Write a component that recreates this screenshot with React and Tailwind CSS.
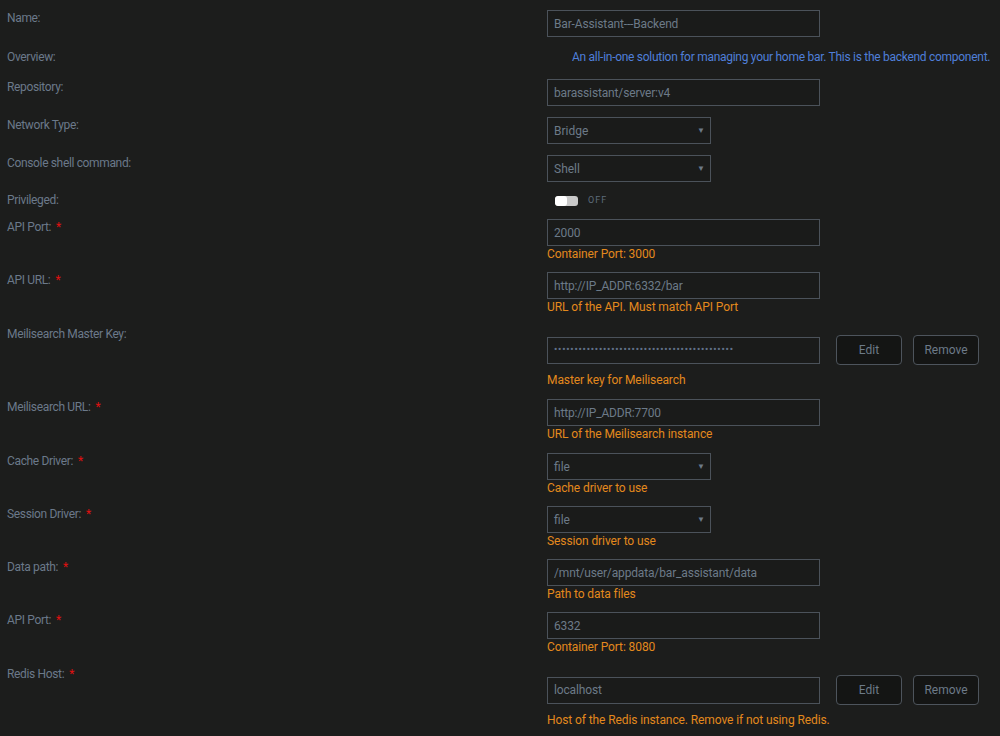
import React from 'react'

const font = { fontFamily: 'Roboto, "Liberation Sans", sans-serif' }

const Label = ({ text, required }) => (
  <div className="w-[540px] shrink-0 pt-[1px] text-[12px] leading-[14px] tracking-[-0.35px] text-[#6b798a]">
    {text}:
    {required && <span className="ml-[5px] text-[#e01010]">*</span>}
  </div>
)

const Row = ({ label, required, className = '', children }) => (
  <div className={`flex pl-[7px] ${className}`}>
    <Label text={label} required={required} />
    <div className="flex-1">{children}</div>
  </div>
)

const TextInput = ({ value, wide = true }) => (
  <input
    readOnly
    value={value}
    className={`block h-[27px] ${wide ? 'w-[273px]' : 'w-[164px]'} border border-[#4b525a] bg-[#1a1b1a] px-[6px] text-[12px] tracking-[-0.15px] text-[#6c7a88] outline-none`}
  />
)

const Select = ({ value }) => (
  <div className="flex h-[27px] w-[164px] items-center justify-between border border-[#4b525a] bg-[#1a1b1a] pl-[6px] pr-[5px] text-[12px] text-[#6c7a88]">
    <span>{value}</span>
    <span className="text-[8px] text-[#6c7a88]">▼</span>
  </div>
)

const Hint = ({ children, className = 'mt-[1px]' }) => (
  <div className={`text-[12px] leading-[14px] tracking-[-0.1px] text-[#e3891c] ${className}`}>{children}</div>
)

const Button = ({ children }) => (
  <button className="h-[30px] w-[66px] rounded-[4px] border border-[#4d545c] bg-[#141514] text-[12px] text-[#6c7a88]">
    {children}
  </button>
)

export default function App() {
  return (
    <div style={font} className="min-h-screen w-full bg-[#1c1d1c] pt-[10px]">
      <Row label="Name" className="mb-[12px]">
        <TextInput value="Bar-Assistant---Backend" />
      </Row>
      <Row label="Overview" className="mb-[15px]">
        <div className="-ml-[15px] pl-[40px] pt-[1px] text-[12px] leading-[14px] tracking-[-0.28px] text-[#4f7fd9] whitespace-nowrap">
          An all-in-one solution for managing your home bar. This is the backend component.
        </div>
      </Row>
      <Row label="Repository" className="mb-[11px]">
        <TextInput value="barassistant/server:v4" />
      </Row>
      <Row label="Network Type" className="mb-[11px]">
        <Select value="Bridge" />
      </Row>
      <Row label="Console shell command" className="mb-[10px]">
        <Select value="Shell" />
      </Row>
      <Row label="Privileged" className="mb-[12px]">
        <div className="flex h-[15px] items-center pl-[8px] pt-[2px]">
          <div className="flex h-[10px] w-[23px] overflow-hidden rounded-[3px] bg-[#c9c9c9]">
            <div className="h-full w-[12px] rounded-[3px] bg-white" />
          </div>
          <span className="ml-[10px] text-[9px] tracking-[1px] text-[#5d6b7a]">OFF</span>
        </div>
      </Row>
      <Row label="API Port" required className="mb-[11px]">
        <TextInput value="2000" />
        <Hint>Container Port: 3000</Hint>
      </Row>
      <Row label="API URL" required className="mb-[12px]">
        <TextInput value="http://IP_ADDR:6332/bar" />
        <Hint>URL of the API. Must match API Port</Hint>
      </Row>
      <Row label="Meilisearch Master Key" className="mb-[12px]">
        <div className="mt-[9px] flex items-center">
          <div className="flex h-[27px] w-[273px] items-center border border-[#4b525a] bg-[#1a1b1a] px-[6px] text-[9px] font-bold tracking-[0.85px] text-[#617189]">
            {'•'.repeat(44)}
          </div>
          <div className="ml-[16px] flex gap-[11px]">
            <Button>Edit</Button>
            <Button>Remove</Button>
          </div>
        </div>
        <Hint className="mt-[8px]">Master key for Meilisearch</Hint>
      </Row>
      <Row label="Meilisearch URL" required className="mb-[12px]">
        <TextInput value="http://IP_ADDR:7700" />
        <Hint>URL of the Meilisearch instance</Hint>
      </Row>
      <Row label="Cache Driver" required className="mb-[11px]">
        <Select value="file" />
        <Hint>Cache driver to use</Hint>
      </Row>
      <Row label="Session Driver" required className="mb-[11px]">
        <Select value="file" />
        <Hint>Session driver to use</Hint>
      </Row>
      <Row label="Data path" required className="mb-[11px]">
        <TextInput value="/mnt/user/appdata/bar_assistant/data" />
        <Hint>Path to data files</Hint>
      </Row>
      <Row label="API Port" required className="mb-[12px]">
        <TextInput value="6332" />
        <Hint>Container Port: 8080</Hint>
      </Row>
      <Row label="Redis Host" required>
        <div className="mt-[9px] flex items-center">
          <TextInput value="localhost" />
          <div className="ml-[16px] flex gap-[11px]">
            <Button>Edit</Button>
            <Button>Remove</Button>
          </div>
        </div>
        <Hint className="mt-[8px]">Host of the Redis instance. Remove if not using Redis.</Hint>
      </Row>
    </div>
  )
}
